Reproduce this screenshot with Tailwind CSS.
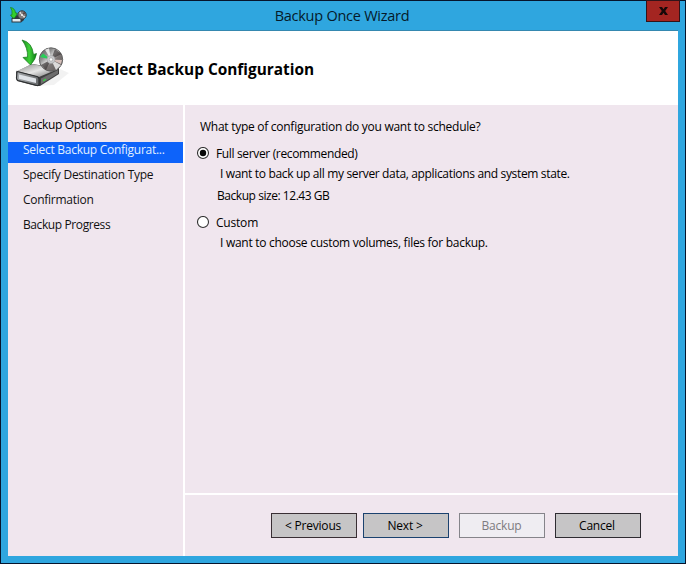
<!DOCTYPE html>
<html lang="en">
<head>
<meta charset="utf-8">
<title>Backup Once Wizard</title>
<script src="https://cdn.jsdelivr.net/npm/@tailwindcss/browser@4"></script>
</head>
<body class="w-[686px] h-[564px] overflow-hidden font-['Open_Sans','Noto_Sans',sans-serif] text-[12px] leading-4 text-[#111] whitespace-nowrap">
<svg class="absolute w-0 h-0">
  <defs>
    <linearGradient id="arrow" x1="0" y1="0" x2="1" y2="0"><stop offset="0" stop-color="#16851b"/><stop offset=".5" stop-color="#3ed038"/><stop offset="1" stop-color="#0c7c14"/></linearGradient>
    <linearGradient id="disc" x1="0" y1="0" x2="1" y2="1"><stop offset="0" stop-color="#555"/><stop offset=".3" stop-color="#8f8f8f"/><stop offset=".45" stop-color="#d4d4d4"/><stop offset=".6" stop-color="#7b7574"/><stop offset="1" stop-color="#5c5757"/></linearGradient>
    <linearGradient id="top" x1="0" y1="0" x2="1" y2="1"><stop offset="0" stop-color="#858585"/><stop offset=".5" stop-color="#e6e6e6"/><stop offset="1" stop-color="#666"/></linearGradient>
    <linearGradient id="front" x1="0" y1="0" x2="1" y2="0"><stop offset="0" stop-color="#a9adb0"/><stop offset="1" stop-color="#67696b"/></linearGradient>
    <symbol id="backup" viewBox="0 0 56 50">
      <path d="M20 47 L39 46 L54 34 L45 30Z" fill="#000" opacity=".05"/>
      <path d="M1 33 L17 25 L44 29 L44 35 L25 47 L21 47 L2 42Z" fill="#404040"/>
      <path d="M2 32 L17 25 L43 30 L24 38Z" fill="url(#top)"/>
      <path d="M2 32.500 L22 37.500 Q24 38 24 40 L24 45 Q24 47 22 46.500 L3 41.500 Q1.500 41 1.500 39Z" fill="url(#front)" stroke="#2d2f31" stroke-width="1.200"/>
      <path d="M4 35.500 L21 39.500 L21 44 L4 39.800Z" fill="#dfe3e8"/>
      <path d="M26 39.500 L43 31 L43 34.500 L26 45Z" fill="#6d6d6d"/>
      <path d="M28 41 L31 39.500 L31 41 L28 42.500Z" fill="#35d043"/>
      <circle cx="36" cy="20.500" r="11.700" fill="url(#disc)" stroke="#5c5c5c" stroke-width=".9"/>
      <path d="M36 20.500 L30 10.800 L34 9.300Z M36 20.500 L41 31 L46 26Z" fill="#fff" opacity=".75"/>
      <path d="M36 20.500 L40 10 L46.500 15Z M36 20.500 L26 26 L31 31Z" fill="#343030" opacity=".65"/>
      <path d="M36 20.500 L25 18 L28 14.500Z" fill="#28cf58"/>
      <path d="M36 20.500 L47 21 L46 25Z" fill="#d5bfba"/>
      <circle cx="36" cy="20.500" r="4" fill="#c9cacd" stroke="#999" stroke-width=".5"/>
      <circle cx="36" cy="20.500" r="1.700" fill="#fff" stroke="#888" stroke-width=".5"/>
      <path d="M7 1 Q17 3 18.500 15.500 L21.500 14.500 Q21 20 15.500 26 Q11.500 22 8 18.500 L12.500 18 Q13 9 7 1Z" fill="url(#arrow)" stroke="#16751b" stroke-width=".7"/>
    </symbol>
    <symbol id="backup-small" viewBox="0 0 17 16">
      <path d="M1.500 11 L6 8 L14 10 L14 13 L11 15.500 L1.500 15.500Z" fill="#303840"/>
      <path d="M2.500 12 L10.500 12 L10.500 14.500 L2.500 14.500Z" fill="#e2eaf0"/>
      <circle cx="12" cy="8" r="4.200" fill="#827e7d" stroke="#33383c"/>
      <path d="M12 8 L9 6 L10.500 4.500Z M12 8 L14 11 L15.500 9.500Z" fill="#ddd"/>
      <path d="M12 8 L14 4.800 L15.500 6.500Z" fill="#594341"/>
      <circle cx="12" cy="8" r="1" fill="#fff"/>
      <path d="M.5 .5 Q5 1 5.500 6 L7.200 6 Q6.500 9 4 11.500 Q1.500 10 .5 8 L2 7.800 Q2.500 3 .5 .5Z" fill="#32cf2c" stroke="#16801b" stroke-width=".7"/>
    </symbol>
  </defs>
</svg>
<div class="h-[564px] border border-[#06142c] bg-[#2fa6df] flex flex-col px-[7px] pb-[7px]">
  <header class="h-[30px] relative flex justify-center shrink-0 border-b border-[#3588b0]">
    <svg class="absolute left-[2px] top-[6px] w-[17px] h-4"><use href="#backup-small"/></svg>
    <h1 class="mr-[2px] text-[14.500px] leading-[30px] tracking-[-0.250px] text-[#051a2a]">Backup Once Wizard</h1>
    <button class="absolute right-[-2px] top-[-1px] w-[34px] h-[22px] bg-[#a42521] border border-[#331319] flex items-center justify-center" aria-label="Close">
      <svg class="w-[9px] h-[8px]" viewBox="0 0 9 8"><path d="M0 0H3L4.500 2.200L6 0H9L6.200 4L9 8H6L4.500 5.700L3 8H0L2.800 4Z" fill="#160808"/></svg>
    </button>
  </header>
  <section class="h-[74px] shrink-0 bg-white flex">
    <svg class="ml-[7px] mt-[8px] w-14 h-[50px]"><use href="#backup"/></svg>
    <h2 class="ml-[26px] mt-[29px] font-bold text-[15.400px] leading-5 text-black">Select Backup Configuration</h2>
  </section>
  <div class="flex-1 flex bg-[#f0e6ee]">
    <nav class="w-[177px] border-r-2 border-white pt-[12px] tracking-[-0.270px]">
      <div class="pl-[15px] h-[25px] text-black font-medium tracking-[-0.350px]">Backup Options</div>
      <div class="pl-[15px] h-[21px] mb-1 bg-[#0d63fa] text-[#e0efff]">Select Backup Configurat...</div>
      <div class="pl-[15px] h-[25px]">Specify Destination Type</div>
      <div class="pl-[15px] h-[25px]">Confirmation</div>
      <div class="pl-[15px] h-[25px] tracking-[-0.400px]">Backup Progress</div>
    </nav>
    <main class="flex-1 flex flex-col">
      <div class="h-[390px] border-b-2 border-white pt-[14px] pl-[12px] text-black">
        <p class="pl-[3px] h-[27px] tracking-[-0.270px]">What type of configuration do you want to schedule?</p>
        <div class="flex h-5">
          <svg class="w-[13px] h-[13px] mt-px mr-[6px]" viewBox="0 0 13 13"><circle cx="6" cy="6" r="5.500" fill="#fff" stroke="#333" stroke-width="1.100"/><circle cx="6" cy="6" r="3.200" fill="#080808"/></svg>
          <span class="tracking-[-0.350px]">Full server (recommended)</span>
        </div>
        <p class="pl-[23px] h-[22px] tracking-[-0.340px]">I want to back up all my server data, applications and system state.</p>
        <p class="pl-[20px] h-[27px] tracking-[-0.450px]">Backup size: 12.43 GB</p>
        <div class="flex h-5">
          <svg class="w-[13px] h-[13px] mt-px mr-[6px]" viewBox="0 0 13 13"><circle cx="6" cy="6" r="5.500" fill="#fff" stroke="#333" stroke-width="1.100"/></svg>
          <span class="tracking-[-0.200px]">Custom</span>
        </div>
        <p class="pl-[23px] tracking-[-0.280px]">I want to choose custom volumes, files for backup.</p>
      </div>
      <footer class="flex pl-[86px] pt-[18px] text-black tracking-[-0.200px]">
        <button class="w-[86px] h-[25px] pr-[2px] bg-[#c6c5c6] border border-[#392f34]">&lt; Previous</button>
        <button class="ml-[6px] w-[86px] h-[25px] pr-[2px] bg-[#c6c5c6] border border-[#1b426f]">Next &gt;</button>
        <button class="ml-[10px] w-[86px] h-[25px] pr-px bg-[#efedf2] border border-[#85848a] text-[#7d7b80]" disabled>Backup</button>
        <button class="ml-[10px] w-[86px] h-[25px] pr-[2px] bg-[#c6c5c6] border border-[#2e2c31]">Cancel</button>
      </footer>
    </main>
  </div>
</div>
</body>
</html>
